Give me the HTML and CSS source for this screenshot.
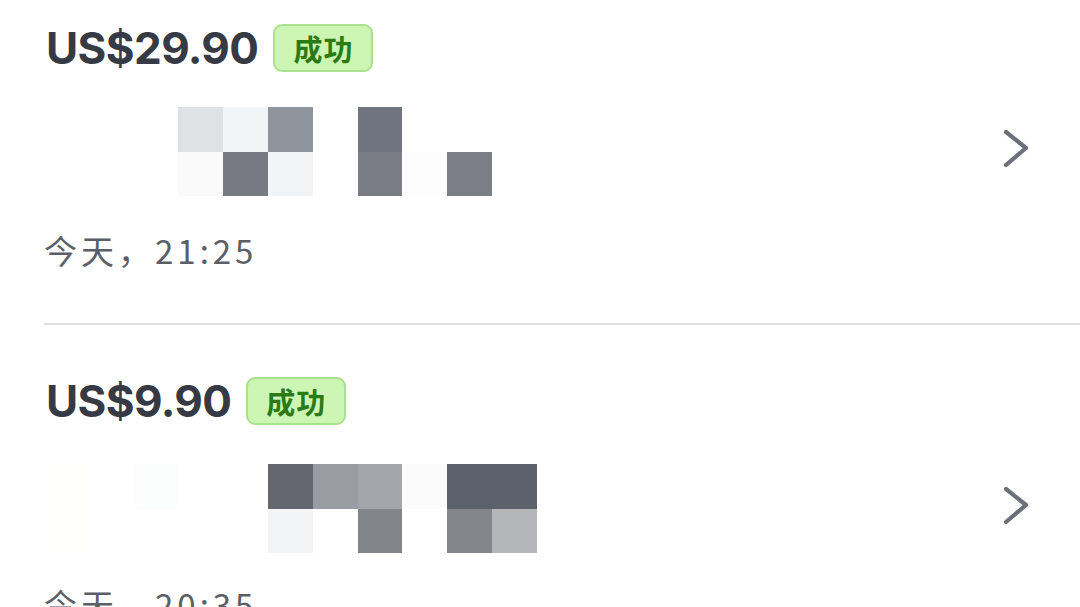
FILE: index.html
```html
<!DOCTYPE html>
<html lang="zh">
<head>
<meta charset="utf-8">
<link rel="stylesheet" href="styles.css">
</head>
<body>
<div class="list">
  <div class="item">
    <div class="head">
      <span class="price">US$29.90</span>
      <span class="badge">成功</span>
    </div>
    <div class="body">
      <div class="mosaic">
        <i></i><i></i><i></i><i class="c-e0"></i><i class="c-f3"></i><i class="c-8f"></i><i></i><i class="c-6f"></i><i></i><i></i><i></i>
        <i></i><i></i><i></i><i class="c-fa"></i><i class="c-77"></i><i class="c-f3"></i><i></i><i class="c-7a"></i><i class="c-fc"></i><i class="c-7b"></i><i></i>
      </div>
      <svg class="chev" width="30" height="42" viewBox="0 0 30 42"><polyline points="5,5 25,21 5,38" fill="none" stroke="#6c707b" stroke-width="4.2" stroke-linecap="round" stroke-linejoin="round"/></svg>
    </div>
    <div class="date">今天，21:25</div>
  </div>
  <div class="sep"></div>
  <div class="item">
    <div class="head">
      <span class="price">US$9.90</span>
      <span class="badge">成功</span>
    </div>
    <div class="body second">
      <div class="mosaic">
        <i class="c-ffc"></i><i></i><i class="c-fd"></i><i></i><i></i><i class="c-64"></i><i class="c-9a"></i><i class="c-a2"></i><i class="c-fb"></i><i class="c-5c"></i><i class="c-5d"></i>
        <i class="c-ffc"></i><i></i><i></i><i></i><i></i><i class="c-f2"></i><i></i><i class="c-83"></i><i></i><i class="c-83b"></i><i class="c-b5"></i>
      </div>
      <svg class="chev" width="30" height="42" viewBox="0 0 30 42"><polyline points="5,5 25,21 5,38" fill="none" stroke="#6c707b" stroke-width="4.2" stroke-linecap="round" stroke-linejoin="round"/></svg>
    </div>
    <div class="date second">今天，20:35</div>
  </div>
</div>
</body>
</html>
```
FILE: styles.css
```css
html, body {
  margin: 0;
  padding: 0;
  background: #ffffff;
  overflow: hidden;
}
body {
  width: 1080px;
  height: 607px;
  font-family: Inter, "Noto Sans CJK SC", sans-serif;
}
.list {
  display: flex;
  flex-direction: column;
}
.item {
  display: flex;
  flex-direction: column;
  padding: 24px 49px 0 44px;
}
.head {
  display: flex;
  align-items: center;
  gap: 15px;
  height: 48px;
}
.price {
  font-family: Inter, sans-serif;
  font-weight: 700;
  font-size: 44px;
  color: #363a44;
  letter-spacing: -0.6px;
  padding-left: 2px;
}
.badge {
  box-sizing: border-box;
  height: 48px;
  padding: 0 18px;
  display: flex;
  align-items: center;
  border: 2px solid #a9e28e;
  border-radius: 9px;
  background: #cdf6b4;
  color: #2c7a17;
  font-family: "Noto Sans CJK SC", sans-serif;
  font-weight: 700;
  font-size: 29px;
  letter-spacing: 1px;
}
.body {
  display: flex;
  align-items: center;
  justify-content: space-between;
  margin-top: 35px;
}
.body.second {
  margin-top: 39px;
}
.mosaic {
  display: grid;
  grid-template-columns: repeat(11, 44.8px);
  grid-auto-rows: 44.6px;
}
.mosaic i { display: block; background: #ffffff; }
.c-e0 { background: #e0e1e4 !important; }
.c-f3 { background: #f3f4f6 !important; }
.c-8f { background: #8f959c !important; }
.c-6f { background: #6f7580 !important; }
.c-fa { background: #fafafa !important; }
.c-77 { background: #777a82 !important; }
.c-7a { background: #7a7d85 !important; }
.c-fc { background: #fcfcfc !important; }
.c-7b { background: #7b7e86 !important; }
.c-ffc { background: #fffffb !important; }
.c-fd { background: #fcfdfd !important; }
.c-64 { background: #646670 !important; }
.c-9a { background: #9a9ca4 !important; }
.c-a2 { background: #a2a5ab !important; }
.c-fb { background: #fbfbfc !important; }
.c-5c { background: #5c606b !important; }
.c-5d { background: #5d616c !important; }
.c-f2 { background: #f2f4f6 !important; }
.c-83 { background: #83858d !important; }
.c-83b { background: #83868d !important; }
.c-b5 { background: #b5b6b9 !important; }
.chev {
  display: block;
  margin-top: -8px;
}
.date {
  margin-top: 34px;
  font-family: "Noto Sans CJK SC", sans-serif;
  font-size: 33px;
  color: #5a5e67;
  letter-spacing: 4px;
  line-height: 40px;
  height: 40px;
  white-space: nowrap;
}
.date.second {
  margin-top: 31px;
}
.sep {
  height: 2px;
  background: #dedede;
  margin: 53px 0 28px 44px;
}
```
